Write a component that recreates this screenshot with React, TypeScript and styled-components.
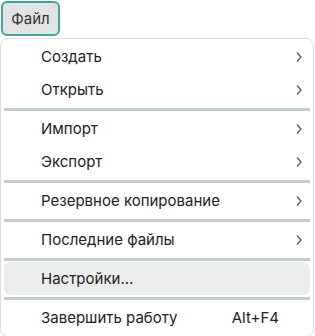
import React from 'react';
import styled, { createGlobalStyle } from 'styled-components';

const GlobalStyle = createGlobalStyle`
  html, body {
    margin: 0;
    padding: 0;
    background: #ffffff;
  }
  body {
    font-family: Inter, "Noto Sans", sans-serif;
    color: #222222;
  }
`;

const Page = styled.div`
  display: flex;
  flex-direction: column;
  align-items: flex-start;
  gap: 2px;
`;

const MenuButton = styled.button`
  margin: 1px 0 0 1px;
  width: 59px;
  height: 35px;
  box-sizing: border-box;
  border: 2px solid #45a49a;
  border-radius: 6px;
  background: #e1e4e4;
  color: #333333;
  font-family: inherit;
  font-size: 15px;
  padding: 0;
  display: flex;
  align-items: center;
  justify-content: center;
`;

const Menu = styled.div`
  width: 314px;
  box-sizing: border-box;
  border: 1px solid #dcdcdc;
  border-radius: 8px;
  padding: 1px 3px 2px;
  display: flex;
  flex-direction: column;
  background: #ffffff;
`;

const Row = styled.div<{ $active?: boolean }>`
  height: 33px;
  display: flex;
  align-items: center;
  padding: 0 7px 0 37px;
  border-radius: 7px;
  font-size: 15px;
  color: #222222;
  background: ${({ $active }) => ($active ? '#ebeded' : 'transparent')};
`;

const Label = styled.span`
  flex: 1;
`;

const Shortcut = styled.span`
  margin-right: 24px;
  color: #222222;
`;

const Separator = styled.div`
  height: 3px;
  margin: 2px 0 1px;
  background: #c2cdcd;
`;

const Chevron = () => (
  <svg width="8" height="12" viewBox="0 0 8 12" fill="none">
    <polyline points="2,1.5 6,6 2,10.5" stroke="#5a6060" strokeWidth="1.4" />
  </svg>
);

type Item = { label: string; sub?: boolean; shortcut?: string; active?: boolean } | 'sep';

const items: Item[] = [
  { label: 'Создать', sub: true },
  { label: 'Открыть', sub: true },
  'sep',
  { label: 'Импорт', sub: true },
  { label: 'Экспорт', sub: true },
  'sep',
  { label: 'Резервное копирование', sub: true },
  'sep',
  { label: 'Последние файлы', sub: true },
  'sep',
  { label: 'Настройки...', active: true },
  'sep',
  { label: 'Завершить работу', shortcut: 'Alt+F4' },
];

export default function App() {
  return (
    <>
      <GlobalStyle />
      <Page>
        <MenuButton>Файл</MenuButton>
        <Menu>
          {items.map((item, i) =>
            item === 'sep' ? (
              <Separator key={i} />
            ) : (
              <Row key={i} $active={item.active}>
                <Label>{item.label}</Label>
                {item.shortcut && <Shortcut>{item.shortcut}</Shortcut>}
                {item.sub && <Chevron />}
              </Row>
            )
          )}
        </Menu>
      </Page>
    </>
  );
}
